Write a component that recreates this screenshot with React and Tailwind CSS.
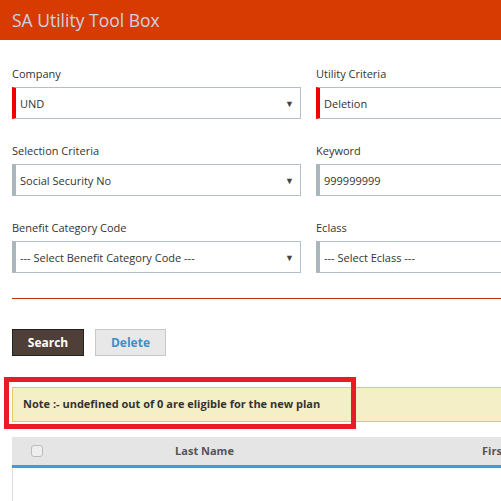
import React from "react";

function Field({ label, value, required, select }) {
  return (
    <div className="flex flex-col">
      <div className="h-[14px] mb-[6px] text-[11px] leading-[14px] text-[#333] whitespace-nowrap">{label}</div>
      <div
        className={`h-[32px] flex items-center border border-[#b4bec5] border-l-[4px] ${
          required ? "border-l-[#f00000]" : "border-l-[#aab6bd]"
        } bg-white pl-[4px] pr-[6px] pt-[2px] text-[11px] text-[#333]`}
      >
        <span className="flex-1 whitespace-nowrap overflow-hidden">{value}</span>
        {select && <span className="text-[9px] text-[#444]">▼</span>}
      </div>
    </div>
  );
}

export default function App() {
  return (
    <div
      className="w-[501px] h-[501px] overflow-hidden bg-white relative"
      style={{ fontFamily: '"Open Sans", "Noto Sans", sans-serif' }}
    >
      <div className="h-[40px] bg-[#d83b01] flex items-center pl-[12px] text-[17.5px] text-[#c9d3e3]">
        SA Utility Tool Box
      </div>
      <div className="pl-[12px] pt-[27px]">
        <div className="grid grid-cols-[289px_300px] gap-x-[15px] gap-y-[25px] w-[620px]">
          <Field label="Company" value="UND" required select />
          <Field label="Utility Criteria" value="Deletion" required />
          <Field label="Selection Criteria" value="Social Security No" select />
          <Field label="Keyword" value="999999999" />
          <Field label="Benefit Category Code" value="--- Select Benefit Category Code ---" select />
          <Field label="Eclass" value="--- Select Eclass ---" />
        </div>
        <div className="mt-[25px] h-[1px] bg-[#b83200]" />
        <div className="mt-[30px] flex gap-[11px]">
          <button className="w-[72px] h-[27px] bg-[#4e4039] border border-[#222] text-white font-bold text-[12px]">
            Search
          </button>
          <button className="w-[71px] h-[27px] bg-[#e8e8e8] border border-[#c8c8c8] text-[#3d8fc8] font-bold text-[12px]">
            Delete
          </button>
        </div>
        <div className="mt-[31px] h-[35px] bg-[#f5efc8] border border-[#e2c766] flex items-center pl-[10px] text-[11px] font-bold text-[#333] w-[560px] whitespace-nowrap">
          Note :- undefined out of 0 are eligible for the new plan
        </div>
        <div className="mt-[15px] w-[600px]">
          <div className="h-[31px] bg-[#e5e5e5] border-b-[3px] border-[#3a9de0] flex items-center text-[11px] font-bold text-[#555] whitespace-nowrap">
            <div className="w-[50px] shrink-0 flex justify-center">
              <span className="w-[12px] h-[12px] border border-[#bbb] rounded-[3px] bg-[#eee]" />
            </div>
            <div className="w-[285px] shrink-0 text-center">Last Name</div>
            <div className="w-[250px] shrink-0 pl-[135px]">First Name</div>
          </div>
          <div className="h-[40px] border-l border-[#ddd]" />
        </div>
      </div>
      <div className="absolute left-[4px] top-[377px] w-[352px] h-[52px] border-[5px] border-[#e81c24]" />
    </div>
  );
}
